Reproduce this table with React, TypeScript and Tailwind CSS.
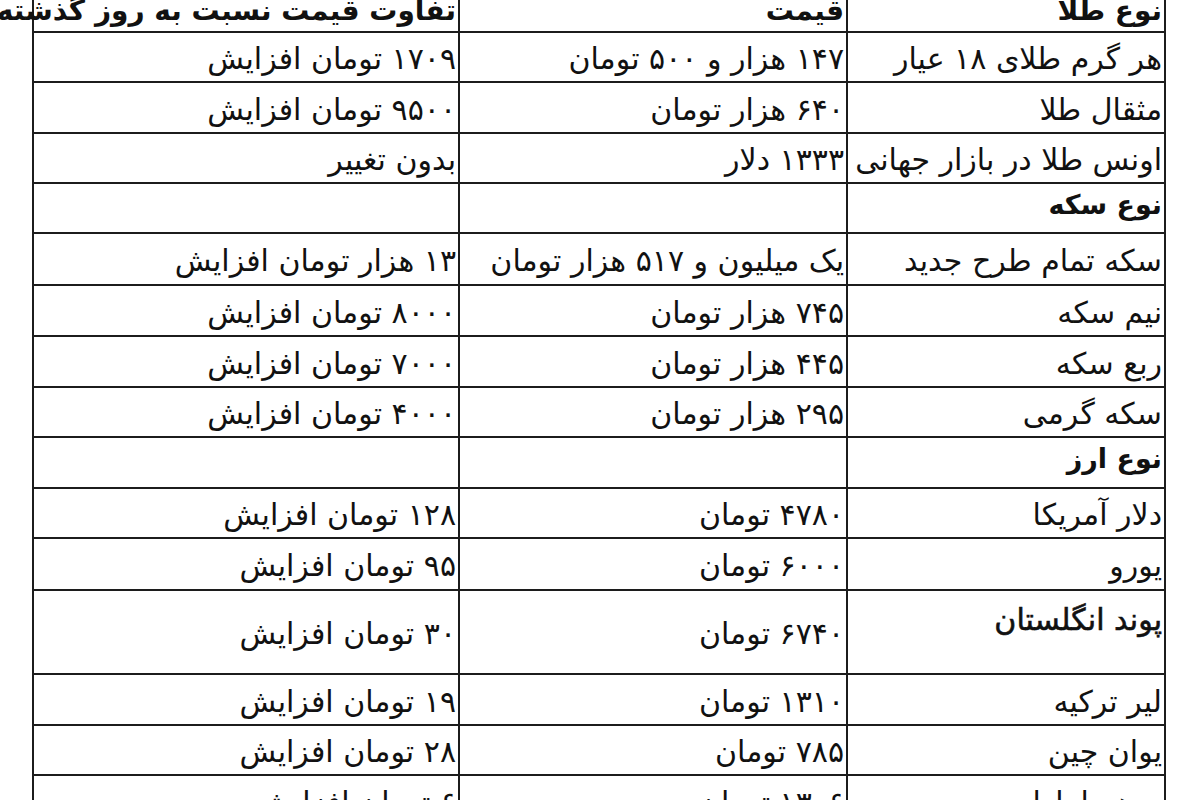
const rows: { name: string; price: string; diff: string; bold?: boolean; heavy?: boolean; h: string; top?: boolean }[] = [
  { name: "هر گرم طلای ۱۸ عیار", price: "۱۴۷ هزار و ۵۰۰ تومان", diff: "۱۷۰۹ تومان افزایش", h: "h-[50px]" },
  { name: "مثقال طلا", price: "۶۴۰ هزار تومان", diff: "۹۵۰۰ تومان افزایش", h: "h-[51px]" },
  { name: "اونس طلا در بازار جهانی", price: "۱۳۳۳ دلار", diff: "بدون تغییر", h: "h-[50px]" },
  { name: "نوع سکه", price: "", diff: "", bold: true, h: "h-[50px]" },
  { name: "سکه تمام طرح جدید", price: "یک میلیون و ۵۱۷ هزار تومان", diff: "۱۳ هزار تومان افزایش", h: "h-[52px]" },
  { name: "نیم سکه", price: "۷۴۵ هزار تومان", diff: "۸۰۰۰ تومان افزایش", h: "h-[51px]" },
  { name: "ربع سکه", price: "۴۴۵ هزار تومان", diff: "۷۰۰۰ تومان افزایش", h: "h-[51px]" },
  { name: "سکه گرمی", price: "۲۹۵ هزار تومان", diff: "۴۰۰۰ تومان افزایش", h: "h-[50px]" },
  { name: "نوع ارز", price: "", diff: "", bold: true, h: "h-[51px]" },
  { name: "دلار آمریکا", price: "۴۷۸۰ تومان", diff: "۱۲۸ تومان افزایش", h: "h-[50px]" },
  { name: "یورو", price: "۶۰۰۰ تومان", diff: "۹۵ تومان افزایش", h: "h-[52px]" },
  { name: "پوند انگلستان", price: "۶۷۴۰ تومان", diff: "۳۰ تومان افزایش", h: "h-[84px]", top: true, heavy: true },
  { name: "لیر ترکیه", price: "۱۳۱۰ تومان", diff: "۱۹ تومان افزایش", h: "h-[51px]" },
  { name: "یوان چین", price: "۷۸۵ تومان", diff: "۲۸ تومان افزایش", h: "h-[50px]" },
  { name: "درهم امارات", price: "۱۳۰۶ تومان", diff: "۶ تومان افزایش", h: "h-[51px]" },
];

const cell = "border-2 border-[#1c1c1c] pr-[2px] pl-0 text-right whitespace-nowrap overflow-visible";

export default function App() {
  return (
    <div className="h-[800px] w-[1200px] overflow-hidden bg-white">
      <div
        dir="rtl"
        className="ml-[32px] mt-[-21px] w-[1134px] text-[30px] leading-none text-[#111]"
        style={{ fontFamily: '"DejaVu Sans", "Noto Sans", sans-serif' }}
      >
        <table className="w-full table-fixed border-collapse">
          <colgroup>
            <col className="w-[318px]" />
            <col className="w-[388px]" />
            <col />
          </colgroup>
          <thead>
            <tr className="h-[52px] text-[28px] font-bold">
              <th className={cell + " align-bottom pb-[6px]"}>نوع طلا</th>
              <th className={cell + " align-bottom pb-[6px]"}>قیمت</th>
              <th className={cell + " align-bottom pb-[6px]"}>تفاوت قیمت نسبت به روز گذشته</th>
            </tr>
          </thead>
          <tbody>
            {rows.map((r) => (
              <tr key={r.name} className={r.h}>
                <td
                  className={
                    cell +
                    (r.bold ? " text-[27px] font-bold align-top pt-[7px]" : "") +
                    (r.heavy ? " [-webkit-text-stroke:0.6px_#111]" : "") +
                    (r.top ? " align-top pt-[14px]" : r.bold ? "" : " align-middle pt-[4px]")
                  }
                >
                  {r.name}
                </td>
                <td className={cell + " align-middle pt-[4px]"}>{r.price}</td>
                <td className={cell + " align-middle pt-[4px]"}>{r.diff}</td>
              </tr>
            ))}
          </tbody>
        </table>
      </div>
    </div>
  );
}
